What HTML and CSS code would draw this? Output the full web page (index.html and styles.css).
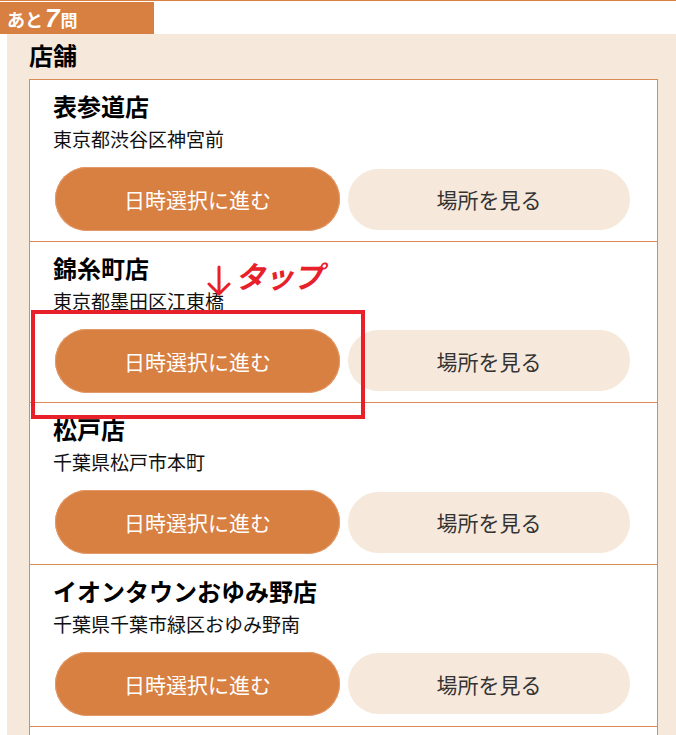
FILE: index.html
```html
<!DOCTYPE html>
<html lang="ja">
<head>
<meta charset="utf-8">
<link rel="stylesheet" href="styles.css">
</head>
<body>
<div class="page">
  <header class="topbar">
    <div class="tab">あと<span class="tab-num">7</span><span class="tab-unit">問</span></div>
  </header>
  <section class="panel">
    <h2 class="panel-title">店舗</h2>
    <ul class="shops">
      <li class="shop">
        <h3 class="shop-name">表参道店</h3>
        <p class="shop-addr">東京都渋谷区神宮前</p>
        <div class="actions">
          <button class="btn btn-primary">日時選択に進む</button>
          <button class="btn btn-secondary">場所を見る</button>
        </div>
      </li>
      <li class="shop">
        <h3 class="shop-name">錦糸町店</h3>
        <p class="shop-addr">東京都墨田区江東橋</p>
        <div class="actions">
          <button class="btn btn-primary">日時選択に進む</button>
          <button class="btn btn-secondary">場所を見る</button>
        </div>
      </li>
      <li class="shop">
        <h3 class="shop-name">松戸店</h3>
        <p class="shop-addr">千葉県松戸市本町</p>
        <div class="actions">
          <button class="btn btn-primary">日時選択に進む</button>
          <button class="btn btn-secondary">場所を見る</button>
        </div>
      </li>
      <li class="shop">
        <h3 class="shop-name">イオンタウンおゆみ野店</h3>
        <p class="shop-addr">千葉県千葉市緑区おゆみ野南</p>
        <div class="actions">
          <button class="btn btn-primary">日時選択に進む</button>
          <button class="btn btn-secondary">場所を見る</button>
        </div>
      </li>
      <li class="shop shop-empty"></li>
    </ul>
  </section>

  <div class="callout-box"></div>
  <div class="callout-label">
    <svg class="callout-arrow" width="24" height="32" viewBox="0 0 24 32">
      <path d="M12 2 V29 M2 19 L12 29 L22 19" fill="none" stroke="#e8202a" stroke-width="3" stroke-linecap="round" stroke-linejoin="round"/>
    </svg>
    <span class="callout-text">タップ</span>
  </div>
</div>
</body>
</html>
```

FILE: styles.css
```css
* { box-sizing: border-box; }

html, body {
  margin: 0;
  padding: 0;
  background: #ffffff;
  overflow: hidden;
}

body {
  font-family: "Noto Sans CJK JP", "Noto Sans", sans-serif;
  color: #111;
}

.page {
  position: relative;
  width: 676px;
  height: 735px;
  overflow: hidden;
}

.topbar {
  border-top: 1px solid #d97f42;
  height: 34px;
  padding-top: 1px;
}

.tab {
  width: 154px;
  height: 32px;
  background: #d87f42;
  color: #fff;
  font-weight: 700;
  font-size: 18px;
  line-height: 32px;
  padding-left: 7px;
  white-space: nowrap;
}

.tab-num {
  font-size: 26px;
  font-style: italic;
  font-family: "Liberation Sans", "Noto Sans", sans-serif;
  margin: 0 1px 0 2px;
}

.tab-unit {
  font-size: 17px;
}

.panel {
  margin-left: 7px;
  background: #f6e8da;
  padding: 3px 18px 0 22px;
  height: 701px;
}

.panel-title {
  margin: 0 0 6px;
  font-size: 24px;
  font-weight: 700;
  line-height: 36px;
  color: #000;
}

.shops {
  list-style: none;
  margin: 0;
  padding: 0;
  background: #fff;
  border: 1px solid #d98a55;
}

.shop {
  padding: 8px 27px 9.67px 25px;
  border-top: 1px solid #d98a55;
}

.shop:first-child {
  border-top: none;
}

.shop-empty {
  height: 40px;
}

.shop-name {
  margin: 0 0 0 -2px;
  font-size: 24px;
  font-weight: 700;
  line-height: 36px;
  color: #000;
}

.shop-addr {
  margin: 0 0 0 -2px;
  font-size: 19px;
  line-height: 30px;
  color: #111;
}

.actions {
  display: flex;
  align-items: center;
  gap: 8px;
  margin-top: 13px;
  height: 64px;
}

.btn {
  font-family: "Noto Sans CJK JP", "Noto Sans", sans-serif;
  font-size: 21px;
  border: none;
  border-radius: 32px;
  cursor: pointer;
  padding: 0;
}

.btn-primary {
  flex: 0 0 285px;
  height: 64px;
  background: #d87f42;
  color: #fff;
  box-shadow: inset 0 0 0 1px #e29a6a;
}

.btn-secondary {
  flex: 0 0 282px;
  height: 61px;
  background: #f6e8da;
  color: #333;
}

.callout-box {
  position: absolute;
  left: 31px;
  top: 310px;
  width: 334px;
  height: 109px;
  border: 4px solid #e8202a;
}

.callout-label {
  position: absolute;
  left: 207px;
  top: 256px;
  display: flex;
  align-items: flex-start;
  gap: 4px;
}

.callout-arrow {
  margin-top: 9px;
}

.callout-text {
  color: #e8202a;
  font-size: 30px;
  font-weight: 700;
  font-style: italic;
  line-height: 38px;
  letter-spacing: -1px;
}
```
